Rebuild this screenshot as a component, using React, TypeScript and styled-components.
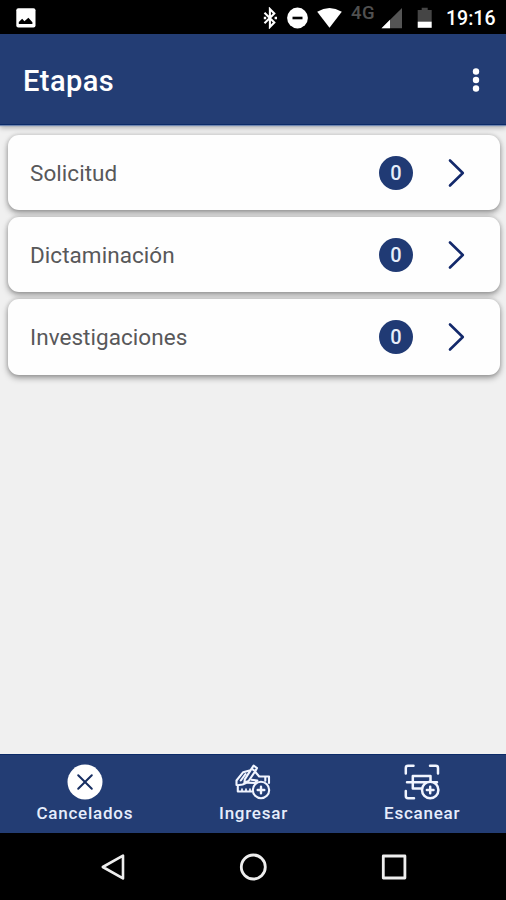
import React from "react";
import styled, { createGlobalStyle } from "styled-components";

const GlobalStyle = createGlobalStyle`
  * { box-sizing: border-box; }
  body { margin: 0; background: #f0f0f0; font-family: Roboto, "Liberation Sans", sans-serif; }
  svg { display: block; flex: none; }
`;

const Screen = styled.div`
  width: 506px;
  height: 900px;
  display: flex;
  flex-direction: column;
  background: #f0f0f0;
  overflow: hidden;
`;

const StatusBar = styled.header`
  height: 34px;
  flex: none;
  display: flex;
  align-items: center;
  justify-content: space-between;
  padding: 1px 11px 0 16px;
  background: #000;
  color: #fff;
`;

const StatusIcons = styled.div`
  display: flex;
  align-items: center;
`;

const GlyphRow = styled.div`
  display: flex;
  gap: 9px;
`;

const Network = styled.span`
  width: 25px;
  margin: 0 5px 9px 9px;
  font-size: 18.5px;
  line-height: 18px;
  font-weight: 500;
  letter-spacing: 0.4px;
  color: #505050;
`;

const BatteryIcon = styled.svg`
  margin-left: 14px;
`;

const Clock = styled.time`
  width: 49px;
  margin: 2px 0 0 13px;
  font-size: 19.5px;
  line-height: 24px;
  font-weight: 500;
  white-space: nowrap;
`;

const AppBar = styled.div`
  height: 91px;
  flex: none;
  display: flex;
  align-items: center;
  justify-content: space-between;
  padding: 4px 25px 0 23px;
  background: #233d74;
  border-bottom: 1px solid #0c2b68;
  box-shadow: 0 1px 1px #7087b0, 0 3px 5px rgba(0, 0, 0, 0.25);
`;

const Title = styled.h1`
  margin: 0;
  color: #fff;
  font-size: 29px;
  font-weight: 500;
  letter-spacing: 0.45px;
`;

const MenuButton = styled.button`
  border: 0;
  padding: 0;
  background: none;
  margin-bottom: 3px;
`;

const StageList = styled.main`
  flex: 1;
  display: flex;
  flex-direction: column;
  gap: 6.8px;
  padding: 9.5px 6px 0 7.5px;
`;

const StageCard = styled.div`
  height: 75.5px;
  display: flex;
  align-items: center;
  padding: 1px 35px 0 22.5px;
  border-radius: 11px;
  background: #fefefe;
  box-shadow: 0 3px 6px rgba(0, 0, 0, 0.36), 0 0 4px rgba(0, 0, 0, 0.16);
`;

const StageName = styled.span`
  flex: 1;
  color: #58585a;
  font-size: 22.5px;
  letter-spacing: 0.05px;
`;

const Count = styled.span`
  width: 34px;
  height: 34px;
  margin-right: 35px;
  border-radius: 50%;
  display: flex;
  align-items: center;
  justify-content: center;
  background: #203a74;
  color: #e6edfa;
  font-size: 20px;
  font-weight: 500;
`;

const BottomBar = styled.nav`
  height: 79px;
  flex: none;
  display: grid;
  grid-template-columns: repeat(3, 1fr);
  background: #233d74;
  border-top: 1px solid #0c2b68;
`;

const BottomItem = styled.div`
  display: flex;
  flex-direction: column;
  align-items: center;
  padding: 9px 0 0 1px;
  gap: 2px;
`;

const BottomLabel = styled.span`
  color: #e6edfc;
  font-size: 17px;
  line-height: 22px;
  font-weight: 500;
  letter-spacing: 0.75px;
`;

const SystemNav = styled.footer`
  height: 67px;
  flex: none;
  display: flex;
  align-items: center;
  justify-content: space-between;
  padding: 0 98px;
  background: #000;
`;

const stages = ["Solicitud", "Dictaminación", "Investigaciones"];

const PictureIcon = () => (
  <svg width="20" height="20" viewBox="0 0 20 20">
    <rect x="0.3" y="0.3" width="19.2" height="19.2" rx="2" fill="#fff" />
    <path d="M2.8 16V14L6.2 10.8 8.4 13.2 12.4 9.7 16.4 14.2V16Z" fill="#000" />
  </svg>
);

const BluetoothIcon = () => (
  <svg width="14" height="22" viewBox="0 0 14 22" fill="none" stroke="#fff" strokeWidth="2.1">
    <path d="M1.5 5.8 11.3 15.6 6.9 20V2L11.3 6.4 1.5 16.2" />
    <path d="M11.6 11h2.4M0.8 11h2.4" strokeWidth="2.4" />
  </svg>
);

const DoNotDisturbIcon = () => (
  <svg width="22" height="22" viewBox="0 0 22 22">
    <circle cx="11.5" cy="11" r="10.4" fill="#fff" />
    <path d="M6.5 11h10" stroke="#000" strokeWidth="2.6" />
  </svg>
);

const WifiIcon = () => (
  <svg width="25" height="22" viewBox="0 0 25 22">
    <path d="M0.2 4.8Q12.5-2.6 24.8 4.8L12.5 20.8Z" fill="#fff" />
  </svg>
);

const SignalIcon = () => (
  <svg width="22" height="22" viewBox="0 0 22 22">
    <path d="M0.5 21.2 21 1V21.2Z" fill="#555" />
    <path d="M0.5 21.2 9 12.8V21.2Z" fill="#fff" />
  </svg>
);

const Chevron = () => (
  <svg width="17" height="30" viewBox="0 0 17 30" fill="none" stroke="#13296b" strokeWidth="2.6" strokeLinecap="round" strokeLinejoin="round">
    <path d="M2 2.5 14.8 15 2 27.5" />
  </svg>
);

const CancelIcon = () => (
  <svg width="36" height="36" viewBox="0 0 36 36">
    <circle cx="18" cy="18" r="17.5" fill="#fff" />
    <path d="m11.2 11.2 13.6 13.6m0-13.6L11.2 24.8" stroke="#172e62" strokeWidth="2" strokeLinecap="round" />
  </svg>
);

const EnterIcon = () => (
  <svg width="36" height="36" viewBox="0 0 36 36" fill="none" stroke="#f1f5ff" strokeWidth="2.1" strokeLinecap="round" strokeLinejoin="round">
    <path d="M1.5 21V16.5L8.2 8.2 14.5 6.5M2.5 21.2 7.6 20.5 12 18.6 20 19 22.3 16.6 16.5 15.8" />
    <path d="M9.8 15.4 16.6 4.6 18.6 1.6 22 4 20.3 7.2 13.6 17 9.4 18.6ZM10.5 10 5.8 16.5M16.8 4.8l3.5 2.4" />
    <path d="M20.8 8.5 24.2 12.5H34V19M30.3 12.8v4M2.8 22.5v5h14" />
    <path d="M7 25.2v2m4-2v2m4-2v2" strokeWidth="1.7" />
    <circle cx="26" cy="26" r="8.2" fill="#233d74" />
    <path d="M26 22.7v6.6m-3.3-3.3h6.6" strokeWidth="2.4" />
  </svg>
);

const ScanIcon = () => (
  <svg width="36" height="36" viewBox="0 0 36 36" fill="none" stroke="#f1f5ff" strokeWidth="2.5" strokeLinecap="round" strokeLinejoin="round">
    <path d="M1.8 9.5V4Q1.8 1.8 4 1.8H9.5M26 1.8h5.8Q34 1.8 34 4v5.5M1.8 27v5Q1.8 34.2 4 34.2h6" />
    <path d="M8.8 18V12H26.5V18M8.8 18V24.5h10M3 18.2h30" />
    <circle cx="26.2" cy="26" r="8.2" fill="#233d74" />
    <path d="M26.2 22.7v6.6m-3.3-3.3h6.6" />
  </svg>
);

const bottomItems = [
  { label: "Cancelados", Icon: CancelIcon },
  { label: "Ingresar", Icon: EnterIcon },
  { label: "Escanear", Icon: ScanIcon },
];

export default function App() {
  return (
    <>
      <GlobalStyle />
      <Screen>
        <StatusBar>
          <PictureIcon />
          <StatusIcons>
            <GlyphRow>
              <BluetoothIcon />
              <DoNotDisturbIcon />
              <WifiIcon />
            </GlyphRow>
            <Network>4G</Network>
            <SignalIcon />
            <BatteryIcon width="16" height="22" viewBox="0 0 16 22">
              <path d="M.7 3h4V.7h6V3h4v11H.7Z" fill="#454545" />
              <path d="M.7 14.5h14v6.3H.7Z" fill="#fff" />
            </BatteryIcon>
            <Clock>19:16</Clock>
          </StatusIcons>
        </StatusBar>
        <AppBar>
          <Title>Etapas</Title>
          <MenuButton aria-label="Menú">
            <svg width="10" height="26" viewBox="0 0 10 26" fill="#fff">
              <circle cx="5" cy="4.5" r="3.2" />
              <circle cx="5" cy="13" r="3.2" />
              <circle cx="5" cy="21.5" r="3.2" />
            </svg>
          </MenuButton>
        </AppBar>
        <StageList>
          {stages.map((name) => (
            <StageCard key={name}>
              <StageName>{name}</StageName>
              <Count>0</Count>
              <Chevron />
            </StageCard>
          ))}
        </StageList>
        <BottomBar>
          {bottomItems.map(({ label, Icon }) => (
            <BottomItem key={label}>
              <Icon />
              <BottomLabel>{label}</BottomLabel>
            </BottomItem>
          ))}
        </BottomBar>
        <SystemNav>
          <svg width="28" height="30" viewBox="0 0 28 30" fill="none" stroke="#eee" strokeWidth="2.6" strokeLinejoin="round">
            <path d="M4.8 15 25 3.6V26.4Z" />
          </svg>
          <svg width="28" height="30" viewBox="0 0 28 30" fill="none" stroke="#eee" strokeWidth="2.8">
            <circle cx="14.3" cy="15" r="12" />
          </svg>
          <svg width="28" height="30" viewBox="0 0 28 30" fill="none" stroke="#eee" strokeWidth="2.8" strokeLinejoin="round">
            <rect x="3.3" y="4" width="21.6" height="22" />
          </svg>
        </SystemNav>
      </Screen>
    </>
  );
}
